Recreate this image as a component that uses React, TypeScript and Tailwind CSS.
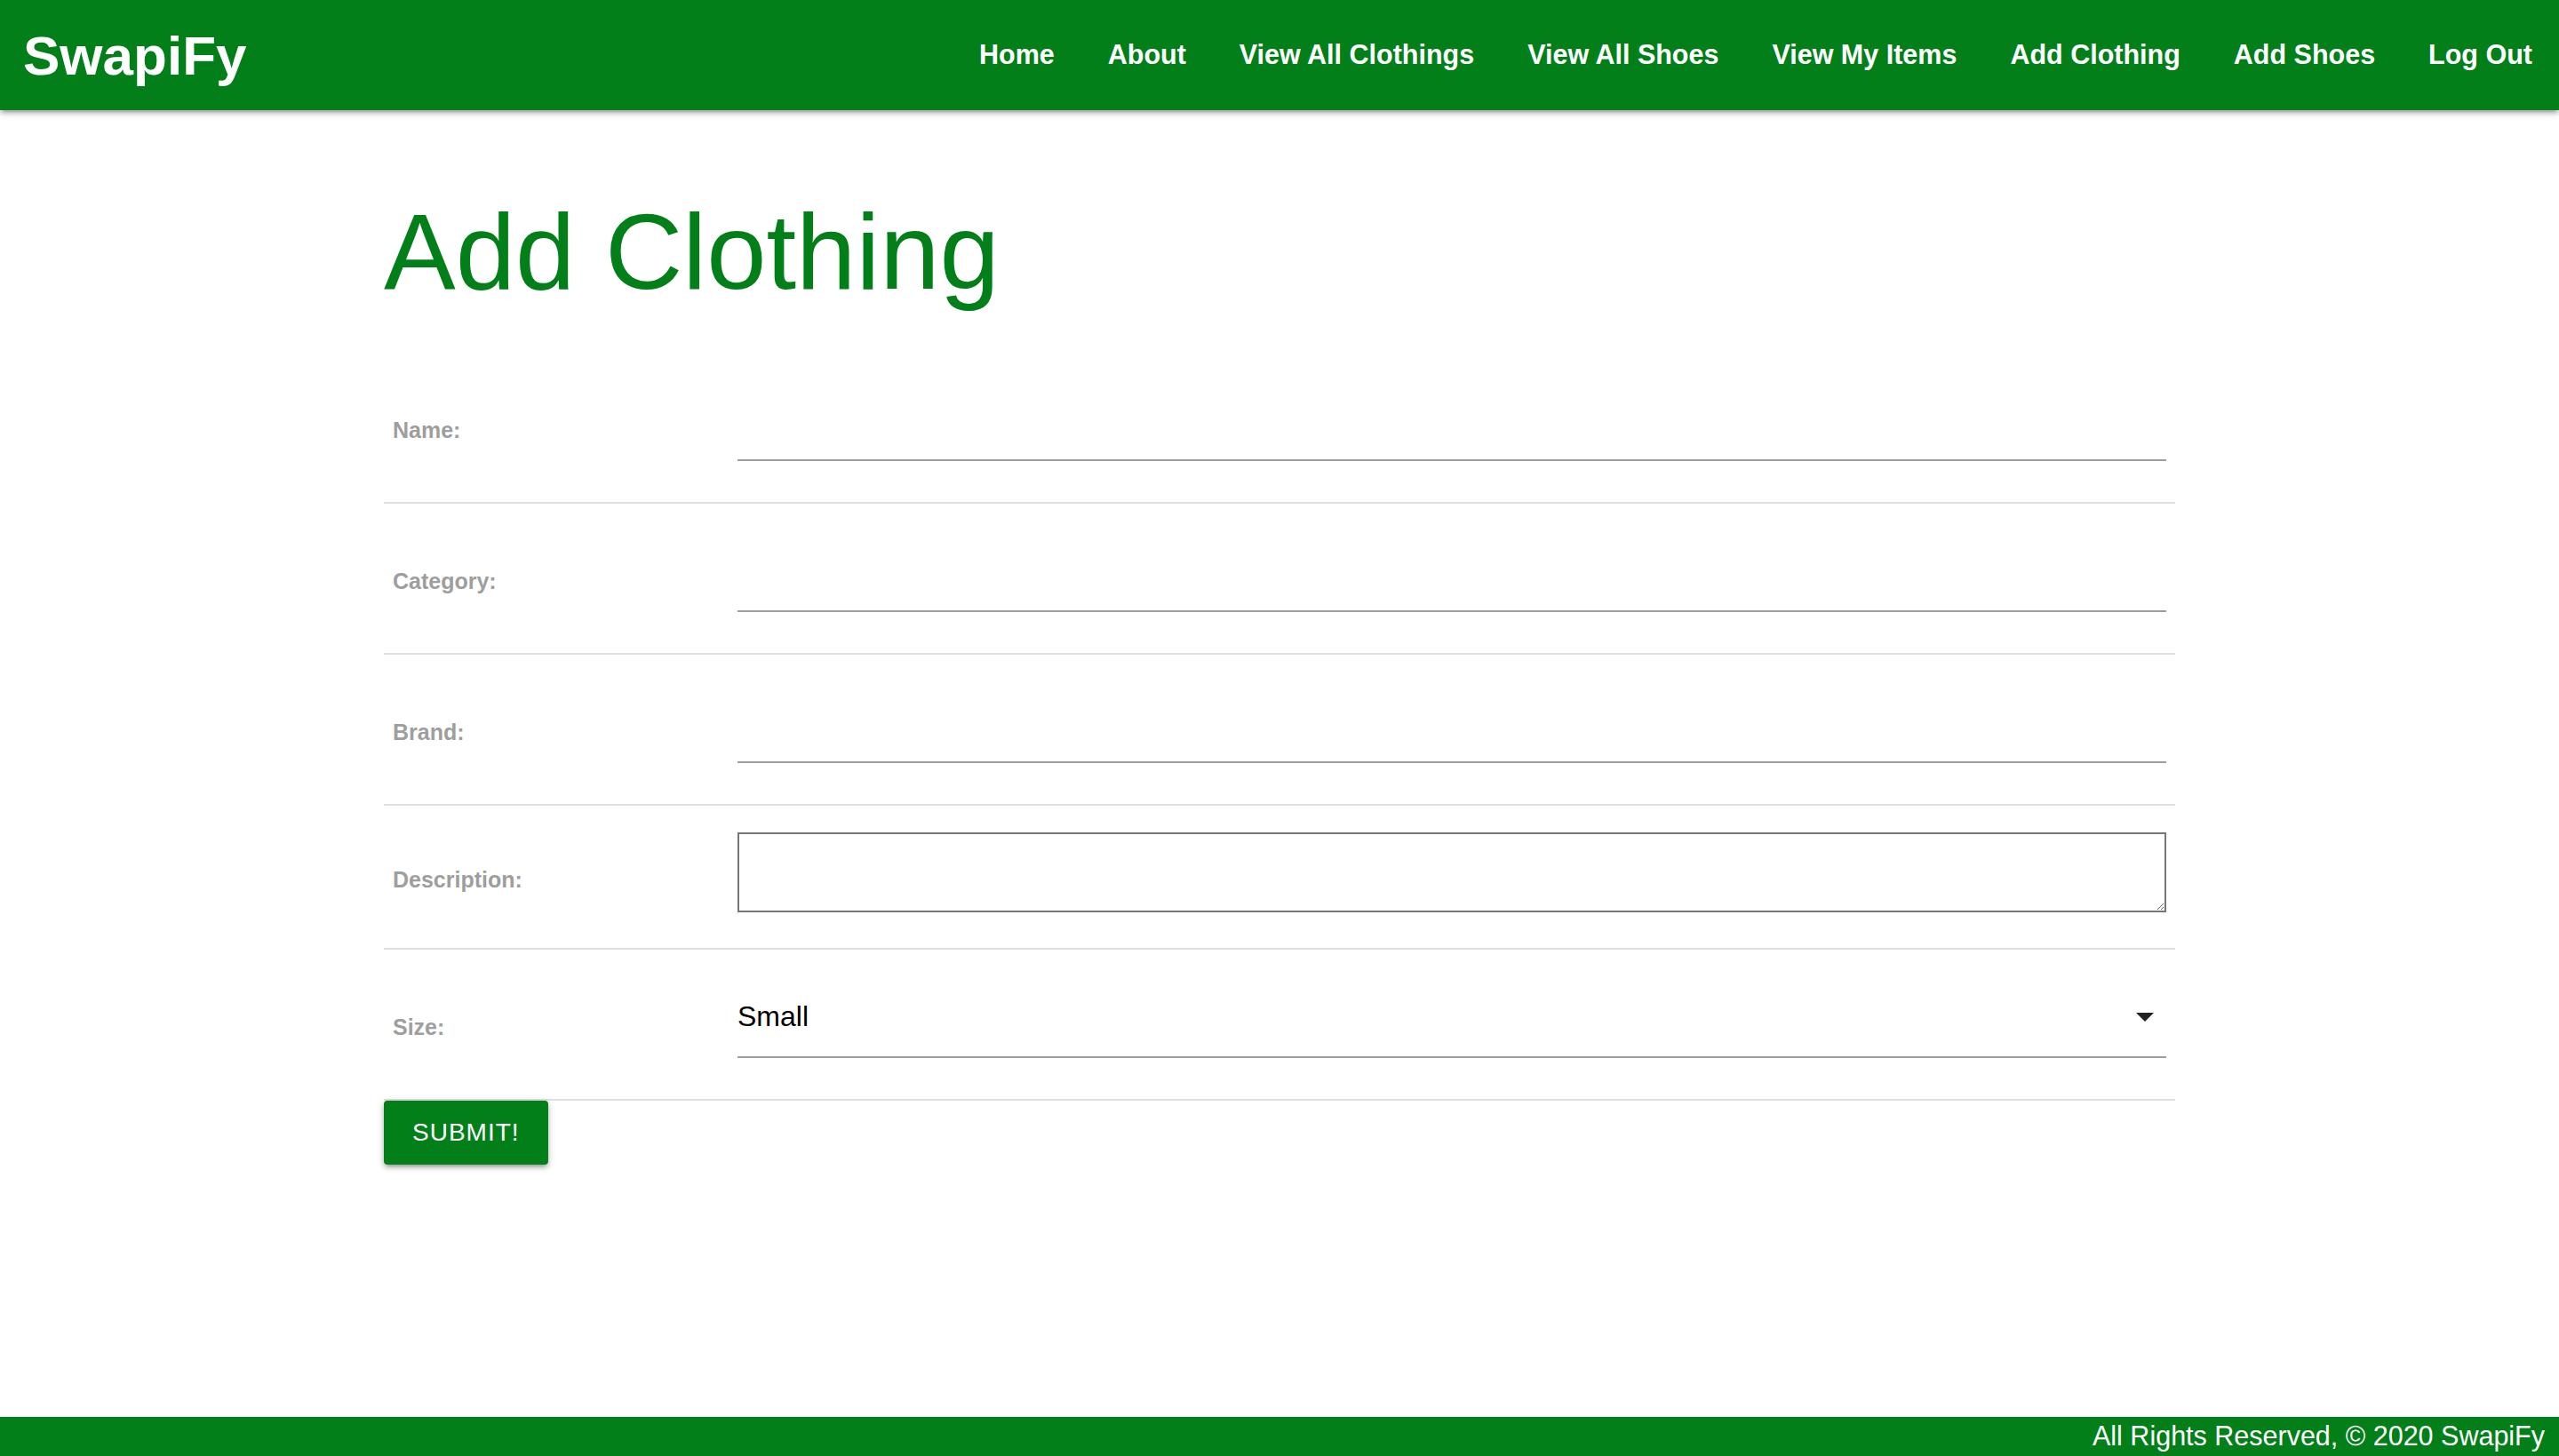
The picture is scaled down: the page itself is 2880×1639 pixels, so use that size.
const links = [
  "Home",
  "About",
  "View All Clothings",
  "View All Shoes",
  "View My Items",
  "Add Clothing",
  "Add Shoes",
  "Log Out",
];

const TextRow: React.FC<{ label: string }> = ({ label }) => (
  <div className="grid grid-cols-[398px_1fr] border-b-2 border-[#e0e0e0]">
    <div className="flex items-center pl-[10px] pt-[8px] text-[25px] font-bold text-[#9e9e9e]">
      {label}
    </div>
    <div className="pt-[24px] pb-[46px] pr-[10px]">
      <input
        type="text"
        className="block h-[98px] w-full border-b-2 border-[#9e9e9e] bg-transparent text-[32px] outline-none"
      />
    </div>
  </div>
);

const App: React.FC = () => {
  return (
    <div className="flex min-h-screen flex-col bg-white font-['Liberation_Sans',Arial,sans-serif]">
      <header className="relative z-10 flex h-[124px] items-center justify-between bg-[#027f19] shadow-[0_4px_4px_0_rgba(0,0,0,0.14),0_6px_2px_-4px_rgba(0,0,0,0.12),0_2px_10px_0_rgba(0,0,0,0.2)]">
        <a href="#" className="pl-[26px] text-[62px] font-bold text-white">
          SwapiFy
        </a>
        <ul className="flex">
          {links.map((l) => (
            <li key={l}>
              <a href="#" className="block px-[30px] text-[30.5px] font-bold text-white">
                {l}
              </a>
            </li>
          ))}
        </ul>
      </header>

      <main className="flex-1">
        <div className="mx-auto w-[70%]">
          <h1 className="mt-[92px] mb-[47px] text-[121px] leading-[134px] font-normal text-[#027f19]">
            Add Clothing
          </h1>

          <form>
            <TextRow label="Name:" />
            <TextRow label="Category:" />
            <TextRow label="Brand:" />

            <div className="grid grid-cols-[398px_1fr] border-b-2 border-[#e0e0e0]">
              <div className="flex items-center pl-[10px] pt-[8px] text-[25px] font-bold text-[#9e9e9e]">
                Description:
              </div>
              <div className="pt-[30px] pb-[40px] pr-[10px]">
                <textarea className="block h-[90px] w-full border-2 border-[#767676] text-[26px] outline-none" />
              </div>
            </div>

            <div className="grid grid-cols-[398px_1fr] border-b-2 border-[#e0e0e0]">
              <div className="flex items-center pl-[10px] pt-[8px] text-[25px] font-bold text-[#9e9e9e]">
                Size:
              </div>
              <div className="pt-[24px] pb-[46px] pr-[10px]">
                <div className="flex h-[98px] items-center justify-between border-b-2 border-[#9e9e9e] pt-[6px] pr-[14px] text-[32px] text-black">
                  <span>Small</span>
                  <svg width="20" height="10" viewBox="0 0 20 10" className="mt-[2px]">
                    <path d="M0 0 L20 0 L10 10 Z" fill="#222" />
                  </svg>
                </div>
              </div>
            </div>

            <button
              type="button"
              className="h-[72px] rounded-[4px] bg-[#027f19] px-[32px] text-[28px] tracking-[1px] text-white uppercase shadow-[0_4px_4px_0_rgba(0,0,0,0.14),0_6px_2px_-4px_rgba(0,0,0,0.12),0_2px_10px_0_rgba(0,0,0,0.2)]"
            >
              Submit!
            </button>
          </form>
        </div>
      </main>

      <footer className="flex h-[44px] items-center justify-end bg-[#027f19] pr-[16px] text-[30.5px] text-white">
        All Rights Reserved, © 2020 SwapiFy
      </footer>
    </div>
  );
};

export default App;
